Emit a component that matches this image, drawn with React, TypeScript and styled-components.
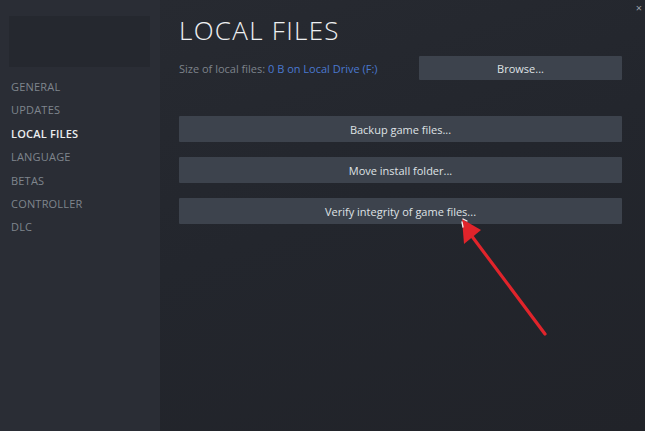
import React from 'react';
import styled, { createGlobalStyle } from 'styled-components';

const GlobalStyle = createGlobalStyle`
  html, body {
    margin: 0;
    padding: 0;
    background: #23262d;
  }
  body {
    font-family: 'Open Sans', 'Noto Sans', sans-serif;
  }
`;

const navItems = ['GENERAL', 'UPDATES', 'LOCAL FILES', 'LANGUAGE', 'BETAS', 'CONTROLLER', 'DLC'];

export default function App() {
  return (
    <>
      <GlobalStyle />
      <Window>
        <Sidebar>
          <GameBanner />
          <Nav>
            {navItems.map(item => (
              <NavItem key={item} active={item === 'LOCAL FILES'}>
                {item}
              </NavItem>
            ))}
          </Nav>
        </Sidebar>
        <Main>
          <CloseMark>×</CloseMark>
          <Title>LOCAL FILES</Title>
          <SizeRow>
            <SizeLabel>
              Size of local files: <DriveLink>0 B on Local Drive (F:)</DriveLink>
            </SizeLabel>
            <Button narrow>Browse...</Button>
          </SizeRow>
          <Actions>
            <Button>Backup game files...</Button>
            <Button>Move install folder...</Button>
            <Button>Verify integrity of game files...</Button>
          </Actions>
          <Arrow width="100" height="130" viewBox="0 0 100 130">
            <line x1="87" y1="117" x2="10" y2="14" stroke="#e0242b" strokeWidth="3.2" strokeLinecap="round" />
            <polygon points="4,2 6,27 23,13" fill="#e0242b" />
            <path d="M4 5 L5 10 M5 2 L9 4" stroke="#f2f2f2" strokeWidth="1.3" strokeLinecap="round" />
          </Arrow>
        </Main>
      </Window>
    </>
  );
}

const Window = styled.div`
  display: flex;
  width: 645px;
  height: 431px;
  overflow: hidden;
`;

const Sidebar = styled.div`
  width: 160px;
  flex-shrink: 0;
  background: #2a2d35;
  padding: 16px 0 0 0;
  box-sizing: border-box;
`;

const GameBanner = styled.div`
  margin: 0 10px 0 9px;
  height: 51px;
  background: #25282f;
`;

const Nav = styled.div`
  display: flex;
  flex-direction: column;
  padding: 8px 0 0 11px;
`;

const NavItem = styled.div<{ active?: boolean }>`
  height: 23.4px;
  line-height: 23.4px;
  font-size: 11px;
  letter-spacing: 0.2px;
  color: ${props => (props.active ? '#ebedef' : '#7f858d')};
  font-weight: ${props => (props.active ? 600 : 400)};
`;

const Main = styled.div`
  position: relative;
  flex: 1;
  padding: 15px 24px 0 19px;
  background: linear-gradient(160deg, #272a31 0%, #23262d 45%, #212329 100%);
`;

const CloseMark = styled.div`
  position: absolute;
  top: 1px;
  right: 4px;
  font-size: 11px;
  line-height: 14px;
  color: #9aa0a8;
`;

const Title = styled.h1`
  margin: 0;
  font-size: 26px;
  font-weight: 300;
  letter-spacing: 1.3px;
  color: #eef0f2;
  line-height: 30px;
`;

const SizeRow = styled.div`
  display: flex;
  align-items: center;
  justify-content: space-between;
  margin-top: 11px;
`;

const SizeLabel = styled.div`
  font-size: 11px;
  color: #7d838b;
`;

const DriveLink = styled.span`
  color: #4a78d0;
`;

const Actions = styled.div`
  display: flex;
  flex-direction: column;
  gap: 15px;
  margin-top: 36px;
`;

const Button = styled.div<{ narrow?: boolean }>`
  width: ${props => (props.narrow ? '203px' : '443px')};
  height: ${props => (props.narrow ? '24px' : '26px')};
  box-sizing: border-box;
  display: flex;
  align-items: center;
  justify-content: center;
  background: #3d434d;
  color: #dfe2e5;
  font-size: 11px;
  border-radius: 1px;
`;

const Arrow = styled.svg`
  position: absolute;
  left: 298px;
  top: 217px;
  overflow: visible;
`;
